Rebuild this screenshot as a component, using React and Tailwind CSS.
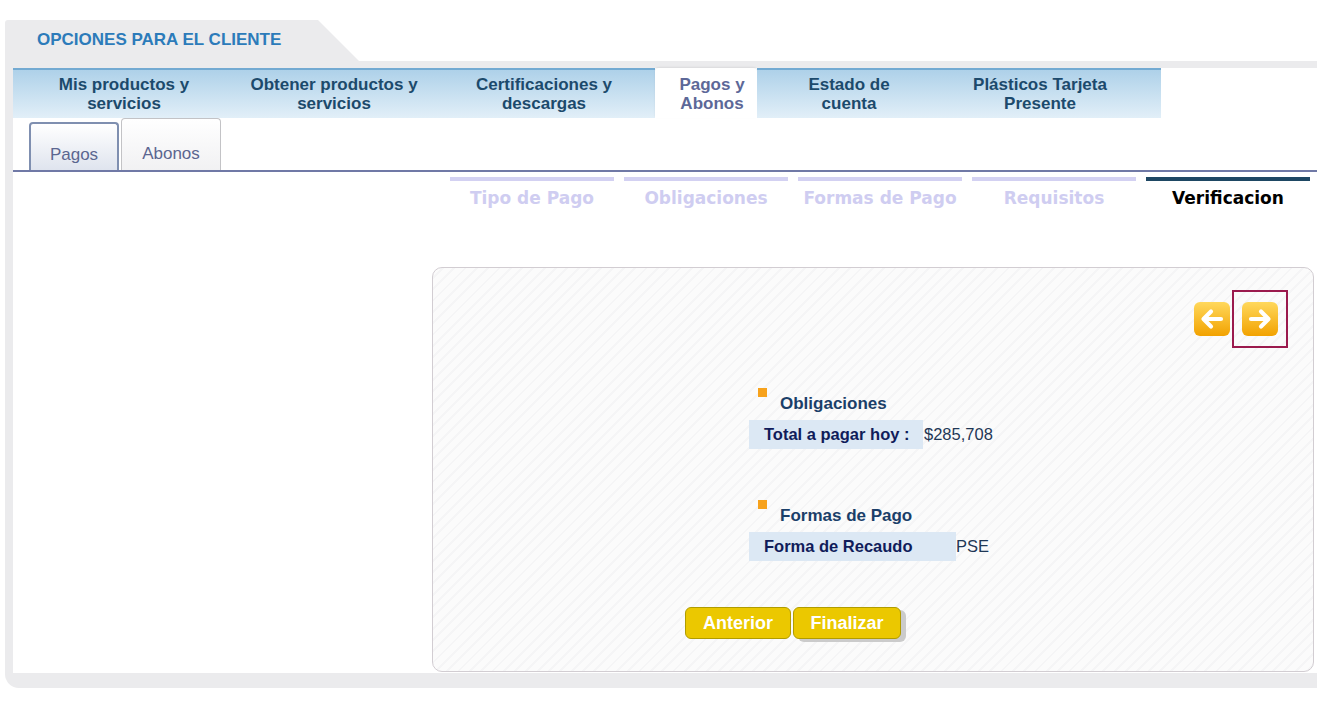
import React from "react";

function ArrowIcon({ dir }) {
  const id = dir === "left" ? "gl" : "gr";
  return (
    <svg width="36" height="34" viewBox="0 0 36 34">
      <defs>
        <linearGradient id={id} x1="0" y1="0" x2="0" y2="1">
          <stop offset="0" stopColor="#ffd85c" />
          <stop offset="1" stopColor="#f2a200" />
        </linearGradient>
      </defs>
      <rect x="0" y="0" width="36" height="34" rx="6" fill={`url(#${id})`} />
      {dir === "left" ? (
        <path d="M27 17 H10 M17 9.5 L9.5 17 L17 24.5" fill="none" stroke="#fff" strokeWidth="4.2" strokeLinecap="round" strokeLinejoin="round" />
      ) : (
        <path d="M9 17 H26 M19 9.5 L26.5 17 L19 24.5" fill="none" stroke="#fff" strokeWidth="4.2" strokeLinecap="round" strokeLinejoin="round" />
      )}
    </svg>
  );
}

const tabs = [
  { l1: "Mis productos y", l2: "servicios", w: "w-[222px]" },
  { l1: "Obtener productos y", l2: "servicios", w: "w-[198px]" },
  { l1: "Certificaciones y", l2: "descargas", w: "w-[222px]" },
  { l1: "Pagos y", l2: "Abonos", w: "w-[102px]", active: true },
  { l1: "Estado de", l2: "cuenta", w: "w-[184px]" },
  { l1: "Plásticos Tarjeta", l2: "Presente", w: "w-[220px]", pr: true },
];

const steps = ["Tipo de Pago", "Obligaciones", "Formas de Pago", "Requisitos", "Verificacion"];

export default function App() {
  return (
    <div className="w-[1317px] h-[707px] bg-white overflow-hidden pt-[20px] pl-[5px] font-['Liberation_Sans',Arial,sans-serif]">
      <div className="w-[1340px]">
        {/* header tab */}
        <div className="h-[41px] w-[354px] bg-[#ebebed] rounded-tl-[3px] [clip-path:polygon(0_0,313px_0,354px_100%,0_100%)] pl-[32px] pt-[10px]">
          <div className="text-[17px] leading-[20px] font-bold text-[#2c7bba]">OPCIONES PARA EL CLIENTE</div>
        </div>
        {/* frame */}
        <div className="bg-[#ebebed] pt-[7px] pl-[8px] pb-[15px] rounded-bl-[14px]">
          <div className="bg-white h-[605px] flex flex-col">
            {/* main tabs */}
            <div className="flex h-[50px]">
              {tabs.map((t, i) =>
                t.active ? (
                  <div key={i} className={`${t.w} h-[50px] bg-white rounded-t-[4px] flex flex-col items-center justify-center pl-[12px] pt-[1px] text-[17px] leading-[19px] font-bold text-[#5d6898] shadow-[0_-1px_2px_rgba(0,0,0,0.08)]`}>
                    <span>{t.l1}</span>
                    <span>{t.l2}</span>
                  </div>
                ) : (
                  <div key={i} className={`${t.w} h-[50px] border-t-2 border-[#73aad2] bg-[linear-gradient(#aed1e9,#e2eff8)] flex flex-col items-center justify-center ${t.pr ? "pr-[22px]" : ""} text-[17px] leading-[19px] font-bold text-[#1c4a6c]`}>
                    <span>{t.l1}</span>
                    <span>{t.l2}</span>
                  </div>
                )
              )}
            </div>
            {/* sub tabs */}
            <div className="flex items-end h-[54px] pl-[16px] gap-[2px] border-b-2 border-[#7079a6]">
              <div className="w-[90px] h-[48px] rounded-t-[4px] border-2 border-b-0 border-[#7f8fb0] bg-[linear-gradient(#ffffff,#dfe4ee)] flex items-end justify-center pb-[5px] text-[17px] leading-[20px] text-[#5b6690]">
                Pagos
              </div>
              <div className="w-[100px] h-[52px] rounded-t-[4px] border border-b-0 border-[#c3c3c6] bg-[linear-gradient(#ffffff,#f1f1f3)] flex items-end justify-center pb-[6px] text-[17px] leading-[20px] text-[#5b6690]">
                Abonos
              </div>
            </div>
            {/* steps */}
            <div className="flex gap-[10px] pl-[437px] mt-[5px]">
              {steps.map((s, i) => {
                const active = i === 4;
                return (
                  <div key={i} className="w-[164px] flex flex-col items-center">
                    <div className={`h-[4px] w-full ${active ? "bg-[#1e4763]" : "bg-[#d3d1f2]"}`} />
                    <div className={`mt-[7px] text-[17px] leading-[20px] font-bold font-['DejaVu_Sans',Verdana,sans-serif] ${active ? "text-black" : "text-[#cfcdf1]"}`}>
                      {s}
                    </div>
                  </div>
                );
              })}
            </div>
            {/* panel */}
            <div className="ml-[419px] mt-[59px] w-[882px] h-[405px] rounded-[10px] border border-[#d2cdd2] bg-[repeating-linear-gradient(135deg,#fbfbfb_0px,#fbfbfb_6px,#f5f5f6_6px,#f5f5f6_8px)] flex flex-col">
              <div className="flex justify-end items-center gap-[2px] pr-[25px] pt-[22px]">
                <ArrowIcon dir="left" />
                <div className="w-[56px] h-[58px] border-2 border-[#9b1a4d] flex items-center justify-center">
                  <ArrowIcon dir="right" />
                </div>
              </div>
              <div className="ml-[316px] mt-[40px] flex flex-col">
                <div className="flex items-start">
                  <div className="w-[9px] h-[9px] ml-[9px] bg-[#f7a21c]" />
                  <div className="ml-[13px] mt-[6px] text-[17px] leading-[19px] font-bold text-[#1b3f69]">Obligaciones</div>
                </div>
                <div className="flex items-center mt-[7px] h-[29px]">
                  <div className="w-[174px] h-[29px] bg-[#dce8f4] pl-[15px] flex items-center text-[16.5px] font-bold text-[#101c5a]">Total a pagar hoy :</div>
                  <div className="ml-[1px] text-[16.5px] text-[#1f3756]">$285,708</div>
                </div>
                <div className="flex items-start mt-[51px]">
                  <div className="w-[9px] h-[9px] ml-[9px] bg-[#f7a21c]" />
                  <div className="ml-[13px] mt-[6px] text-[17px] leading-[19px] font-bold text-[#1b3f69]">Formas de Pago</div>
                </div>
                <div className="flex items-center mt-[7px] h-[29px]">
                  <div className="w-[207px] h-[29px] bg-[#dce8f4] pl-[15px] flex items-center text-[16.5px] font-bold text-[#101c5a]">Forma de Recaudo</div>
                  <div className="text-[16.5px] text-[#1f3756]">PSE</div>
                </div>
              </div>
              <div className="ml-[252px] mt-[46px] flex gap-[2px]">
                <div className="w-[106px] h-[32px] rounded-[6px] border border-[#b09c00] bg-[#ebc800] flex items-center justify-center text-[18px] font-bold text-white">Anterior</div>
                <div className="w-[108px] h-[32px] rounded-[6px] border border-[#b09c00] bg-[#ebc800] flex items-center justify-center text-[18px] font-bold text-white shadow-[5px_3px_0_#cbcbcb]">Finalizar</div>
              </div>
            </div>
          </div>
        </div>
      </div>
    </div>
  );
}
